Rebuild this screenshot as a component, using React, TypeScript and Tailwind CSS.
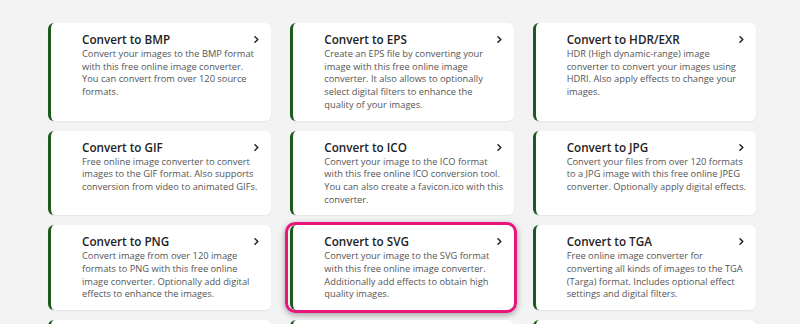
import React from "react";

interface Converter {
  title: string;
  lines: string[];
  highlight?: boolean;
}

const converters: Converter[] = [
  {
    title: "Convert to BMP",
    lines: [
      "Convert your images to the BMP format",
      "with this free online image converter.",
      "You can convert from over 120 source",
      "formats.",
    ],
  },
  {
    title: "Convert to EPS",
    lines: [
      "Create an EPS file by converting your",
      "image with this free online image",
      "converter. It also allows to optionally",
      "select digital filters to enhance the",
      "quality of your images.",
    ],
  },
  {
    title: "Convert to HDR/EXR",
    lines: [
      "HDR (High dynamic-range) image",
      "converter to convert your images using",
      "HDRI. Also apply effects to change your",
      "images.",
    ],
  },
  {
    title: "Convert to GIF",
    lines: [
      "Free online image converter to convert",
      "images to the GIF format. Also supports",
      "conversion from video to animated GIFs.",
    ],
  },
  {
    title: "Convert to ICO",
    lines: [
      "Convert your image to the ICO format",
      "with this free online ICO conversion tool.",
      "You can also create a favicon.ico with this",
      "converter.",
    ],
  },
  {
    title: "Convert to JPG",
    lines: [
      "Convert your files from over 120 formats",
      "to a JPG image with this free online JPEG",
      "converter. Optionally apply digital effects.",
    ],
  },
  {
    title: "Convert to PNG",
    lines: [
      "Convert image from over 120 image",
      "formats to PNG with this free online",
      "image converter. Optionally add digital",
      "effects to enhance the images.",
    ],
  },
  {
    title: "Convert to SVG",
    lines: [
      "Convert your image to the SVG format",
      "with this free online image converter.",
      "Additionally add effects to obtain high",
      "quality images.",
    ],
    highlight: true,
  },
  {
    title: "Convert to TGA",
    lines: [
      "Free online image converter for",
      "converting all kinds of images to the TGA",
      "(Targa) format. Includes optional effect",
      "settings and digital filters.",
    ],
  },
  {
    title: "Convert to TIFF",
    lines: ["Convert your images to the TIFF format", "with this free online image converter."],
  },
  {
    title: "Convert to WBMP",
    lines: ["Convert your images to the WBMP format", "with this free online image converter."],
  },
  {
    title: "Convert to WebP",
    lines: ["Convert your images to the WebP format", "with this free online image converter."],
  },
];

function Chevron() {
  return (
    <svg
      width="5"
      height="7"
      viewBox="0 0 5 7"
      className="absolute top-[13px] right-[12px]"
    >
      <path
        d="M1 0.8 L3.8 3.5 L1 6.2"
        fill="none"
        stroke="#222"
        strokeWidth="1.5"
        strokeLinecap="round"
        strokeLinejoin="round"
      />
    </svg>
  );
}

function ConverterCard({ item }: { item: Converter }) {
  return (
    <div className="relative">
      <div className="relative h-full bg-white rounded-[6px] border-l-[3px] border-[#1d5a1d] shadow-[0_1px_2px_rgba(0,0,0,0.06)] pl-[31px] pr-[8px] pt-[8px] pb-[9px]">
        <h3 className="text-[11.7px] leading-[17px] font-semibold text-[#222]">
          {item.title}
        </h3>
        <p className="text-[9.3px] leading-[12.7px] text-[#555]">
          {item.lines.map((line) => (
            <span key={line} className="block whitespace-nowrap">
              {line}
            </span>
          ))}
        </p>
        <Chevron />
      </div>
      {item.highlight && (
        <div className="absolute -top-[3px] -bottom-[3px] -left-[5px] -right-[3px] rounded-[10px] border-[3px] border-[#e8157d] shadow-[0_2px_6px_rgba(0,0,0,0.35)] pointer-events-none" />
      )}
    </div>
  );
}

export default function App() {
  return (
    <div
      className="min-h-[324px] bg-[#f3f3f3] pt-[23px] pl-[48px] pr-[44px]"
      style={{ fontFamily: '"Open Sans", "Noto Sans", sans-serif' }}
    >
      <div className="grid grid-cols-3 gap-x-[19px] gap-y-[10px]">
        {converters.map((c) => (
          <ConverterCard key={c.title} item={c} />
        ))}
      </div>
    </div>
  );
}
